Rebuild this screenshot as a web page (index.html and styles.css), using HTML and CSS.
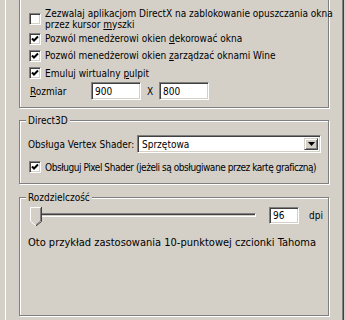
FILE: index.html
```html
<!DOCTYPE html>
<html>
<head>
<meta charset="utf-8">
<link rel="stylesheet" href="styles.css">
</head>
<body>
<div class="panel">
  <div class="group g1">
    <div class="row r1">
      <span class="cb"></span>
      <span class="lbl">Zezwalaj aplikacjom DirectX na zablokowanie opuszczania okna<br>przez kursor <u>m</u>yszki</span>
    </div>
    <div class="row r2">
      <span class="cb on"><svg width="8" height="8" viewBox="0 0 8 8"><path d="M1 3.5 L3 5.5 L7 1.5" stroke="#000" stroke-width="2" fill="none"/></svg></span>
      <span class="lbl">Pozwól menedżerowi okien <u>d</u>ekorować okna</span>
    </div>
    <div class="row r3">
      <span class="cb on"><svg width="8" height="8" viewBox="0 0 8 8"><path d="M1 3.5 L3 5.5 L7 1.5" stroke="#000" stroke-width="2" fill="none"/></svg></span>
      <span class="lbl">Pozwól menedżerowi okien <u>z</u>arządzać oknami Wine</span>
    </div>
    <div class="row r4">
      <span class="cb on"><svg width="8" height="8" viewBox="0 0 8 8"><path d="M1 3.5 L3 5.5 L7 1.5" stroke="#000" stroke-width="2" fill="none"/></svg></span>
      <span class="lbl">Emuluj wirtualny <u>p</u>ulpit</span>
    </div>
    <div class="row size">
      <span class="size-lbl"><u>R</u>ozmiar</span>
      <span class="field w1">900</span>
      <span class="x">X</span>
      <span class="field w2">800</span>
    </div>
  </div>

  <div class="group g2">
    <div class="legend">Direct3D</div>
    <div class="row vs">
      <span class="vs-lbl">Obsługa Vertex Shader:</span>
      <span class="select"><span class="sel-text">Sprzętowa</span><span class="sel-btn"><svg width="7" height="4" viewBox="0 0 7 4"><path d="M0 0 H7 L3.5 4 Z" fill="#000"/></svg></span></span>
    </div>
    <div class="row ps">
      <span class="cb on"><svg width="8" height="8" viewBox="0 0 8 8"><path d="M1 3.5 L3 5.5 L7 1.5" stroke="#000" stroke-width="2" fill="none"/></svg></span>
      <span class="lbl tight">Obsługuj Pixel Shader (jeżeli są obsługiwane przez kartę graficzną)</span>
    </div>
  </div>

  <div class="group g3">
    <div class="legend">Rozdzielczość</div>
    <div class="row dpi">
      <span class="slider">
        <span class="track"></span>
        <svg class="thumb" width="12" height="19" viewBox="0 0 12 19">
          <path d="M0.5 14 V0.5 H11.5 V14 L6 18.5 Z" fill="#d4d0c8"/>
          <path d="M0.5 14 V0.5 H10.5" stroke="#fff" fill="none"/>
          <path d="M0.5 14 L5.5 18.5" stroke="#fff" fill="none"/>
          <path d="M11.5 0 V14.5 L6 19" stroke="#404040" fill="none"/>
          <path d="M10.5 1 V14 L6 17.8" stroke="#808080" fill="none"/>
        </svg>
      </span>
      <span class="field w3">96</span>
      <span class="dpi-lbl">dpi</span>
    </div>
    <div class="sample">Oto przykład zastosowania 10-punktowej czcionki Tahoma</div>
  </div>
</div>
</body>
</html>
```
FILE: styles.css
```css
* { box-sizing: border-box; }
html, body {
  margin: 0;
  height: 320px;
  overflow: hidden;
  background: #d4d0c8;
}
body {
  font-family: "DejaVu Sans Condensed", "DejaVu Sans", sans-serif;
  font-size: 10px;
  line-height: 11px;
  color: #000;
}
.panel {
  margin-top: -30px;
  margin-left: 5px;
  width: 339px;
  height: 420px;
  border-left: 1px solid #fff;
  border-right: 1px solid #404040;
  box-shadow: inset -1px 0 #808080;
  padding: 0 14px 0 13px;
}
.group {
  border: 1px solid #808080;
  box-shadow: inset 1px 1px #fff, 1px 1px #fff;
}
.g1 {
  margin-top: 18px;
  padding: 19px 0 7px 9px;
}
.row {
  display: flex;
  align-items: center;
}
.r1 { height: 22px; }
.r2 { height: 17px; }
.r3 { height: 17px; }
.r4 { height: 18px; }
.size { height: 18px; padding-left: 1px; }
.cb {
  width: 12px;
  height: 12px;
  flex: none;
  background: #fff;
  border-top: 1px solid #808080;
  border-left: 1px solid #808080;
  border-bottom: 1px solid #fff;
  border-right: 1px solid #fff;
  box-shadow: inset 1px 1px #404040, inset -1px -1px #d4d0c8;
  display: flex;
  align-items: center;
  justify-content: center;
  margin-right: 4px;
}
.cb svg { display: block; }
.lbl { white-space: nowrap; }
.tight { letter-spacing: -0.45px; }
.size-lbl { width: 61px; }
.field {
  height: 18px;
  background: #fff;
  border-top: 1px solid #808080;
  border-left: 1px solid #808080;
  border-bottom: 1px solid #fff;
  border-right: 1px solid #fff;
  box-shadow: inset 1px 1px #404040, inset -1px -1px #d4d0c8;
  padding: 0 3px;
  display: flex;
  align-items: center;
}
.w1 { width: 50px; }
.w2 { width: 50px; }
.x { width: 18px; text-align: center; }
.legend {
  width: fit-content;
  margin: -6px 0 0 6px;
  padding: 0 2px;
  background: #d4d0c8;
  line-height: 11px;
}
.g2 {
  margin-top: 12px;
  padding: 0 0 8px 0;
}
.vs {
  height: 18px;
  margin-top: 9px;
  padding-left: 8px;
}
.vs-lbl { width: 109px; }
.select {
  width: 184px;
  height: 18px;
  background: #fff;
  border-top: 1px solid #808080;
  border-left: 1px solid #808080;
  border-bottom: 1px solid #fff;
  border-right: 1px solid #fff;
  box-shadow: inset 1px 1px #404040, inset -1px -1px #d4d0c8;
  padding: 2px;
  display: flex;
  align-items: stretch;
}
.sel-text {
  flex: 1;
  padding-left: 2px;
  display: flex;
  align-items: center;
}
.sel-btn {
  width: 14px;
  background: #d4d0c8;
  border-top: 1px solid #d4d0c8;
  border-left: 1px solid #d4d0c8;
  border-bottom: 1px solid #404040;
  border-right: 1px solid #404040;
  box-shadow: inset 1px 1px #fff, inset -1px -1px #808080;
  display: flex;
  align-items: center;
  justify-content: center;
}
.ps {
  height: 16px;
  margin-top: 6px;
  padding-left: 9px;
}
.g3 {
  margin-top: 13px;
  height: 119px;
}
.dpi {
  height: 19px;
  margin-top: 4px;
  padding-left: 10px;
  align-items: flex-start;
}
.slider {
  position: relative;
  width: 226px;
  height: 19px;
  flex: none;
}
.track {
  position: absolute;
  left: 3px;
  right: 0;
  top: 6px;
  height: 4px;
  border-top: 1px solid #808080;
  border-left: 1px solid #808080;
  border-bottom: 1px solid #fff;
  border-right: 1px solid #fff;
  box-shadow: inset 1px 1px #404040, inset -1px -1px #d4d0c8;
}
.thumb {
  position: absolute;
  left: 0;
  top: 0;
  display: block;
}
.w3 {
  width: 30px;
  height: 17px;
  margin-left: 13px;
}
.dpi-lbl {
  margin-left: 10px;
  line-height: 17px;
}
.sample {
  margin-top: 10px;
  padding-left: 8px;
  font-size: 11px;
  line-height: 14px;
  white-space: nowrap;
}
```
